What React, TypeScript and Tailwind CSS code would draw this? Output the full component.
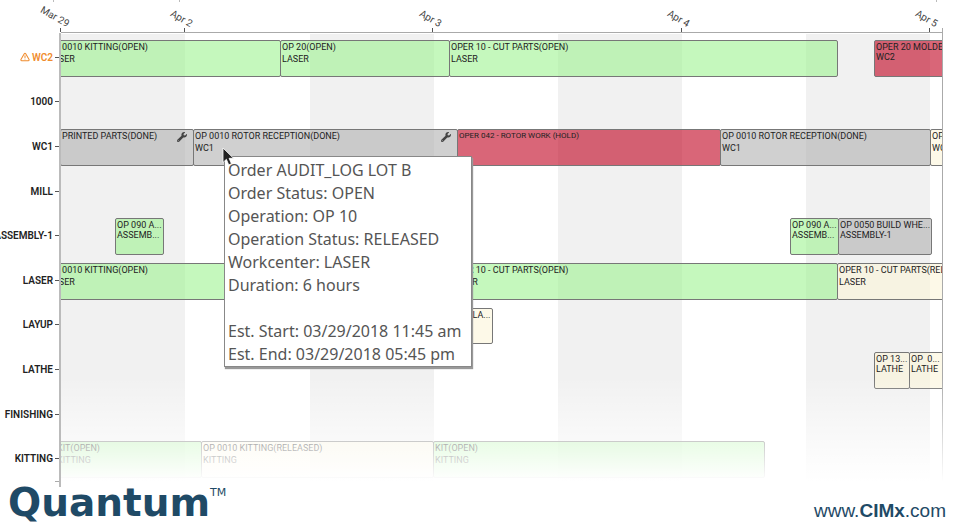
import { clsx } from 'clsx'
import { TriangleAlert } from 'lucide-react'
import { FaWrench } from 'react-icons/fa'

type Status = 'open' | 'done' | 'hold' | 'released'

interface Task {
  start: number
  end: number
  title: string
  center?: string
  status: Status
  compact?: boolean
  wrench?: boolean
}

interface Lane {
  name: string
  warning?: boolean
  tasks: Task[]
}

// width of the visible time range, in the same units as start / end
const RANGE = 881

const pct = (value: number) => `${(value / RANGE) * 100}%`

const days = [
  { label: 'Mar 29', at: 0 },
  { label: 'Apr 2', at: 124 },
  { label: 'Apr 3', at: 372 },
  { label: 'Apr 4', at: 620 },
  { label: 'Apr 5', at: 868 },
]

// ends of the ticks that belong to the row above the dates
const upperTicks = [-8, 118, 874]

const shifts = [0, 249, 497, 745]

const statusClass: Record<Status, string> = {
  open: 'bg-[#9ef391]/60',
  done: 'bg-[#b1b1b1]/60',
  hold: 'bg-[#c0001e]/60',
  released: 'bg-[#fcf5d9]/60',
}

const lanes: Lane[] = [
  {
    name: 'WC2',
    warning: true,
    tasks: [
      { start: -15, end: 220, title: 'OP 0010 KITTING(OPEN)', center: 'LASER', status: 'open' },
      { start: 219, end: 389, title: 'OP 20(OPEN)', center: 'LASER', status: 'open' },
      { start: 388, end: 777, title: 'OPER 10 - CUT PARTS(OPEN)', center: 'LASER', status: 'open' },
      { start: 813, end: 890, title: 'OPER 20 MOLDE...', center: 'WC2', status: 'hold', compact: true },
    ],
  },
  { name: '1000', tasks: [] },
  {
    name: 'WC1',
    tasks: [
      { start: -1, end: 133, title: 'PRINTED PARTS(DONE)', status: 'done', wrench: true },
      { start: 132, end: 397, title: 'OP 0010 ROTOR RECEPTION(DONE)', center: 'WC1', status: 'done', wrench: true },
      { start: 396, end: 660, title: 'OPER 042 - ROTOR WORK (HOLD)', status: 'hold' },
      { start: 659, end: 870, title: 'OP 0010 ROTOR RECEPTION(DONE)', center: 'WC1', status: 'done' },
      { start: 869, end: 960, title: 'OP 0020', center: 'WC1', status: 'released' },
    ],
  },
  { name: 'MILL', tasks: [] },
  {
    name: 'ASSEMBLY-1',
    tasks: [
      { start: 54, end: 103, title: 'OP 090 A...', center: 'ASSEMB...', status: 'open', compact: true },
      { start: 729, end: 778, title: 'OP 090 A...', center: 'ASSEMB...', status: 'open', compact: true },
      { start: 777, end: 871, title: 'OP 0050 BUILD WHE...', center: 'ASSEMBLY-1', status: 'done', compact: true },
    ],
  },
  {
    name: 'LASER',
    tasks: [
      { start: -15, end: 220, title: 'OP 0010 KITTING(OPEN)', center: 'LASER', status: 'open' },
      { start: 388, end: 777, title: 'OPER 10 - CUT PARTS(OPEN)', center: 'LASER', status: 'open' },
      { start: 776, end: 960, title: 'OPER 10 - CUT PARTS(RELEASED)', center: 'LASER', status: 'released' },
    ],
  },
  {
    name: 'LAYUP',
    tasks: [{ start: 383, end: 432, title: 'OP 10 LA...', status: 'released', compact: true }],
  },
  {
    name: 'LATHE',
    tasks: [
      { start: 813, end: 849, title: 'OP 13...', center: 'LATHE', status: 'released', compact: true },
      { start: 848, end: 890, title: 'OP  0...', center: 'LATHE', status: 'released', compact: true },
    ],
  },
  { name: 'FINISHING', tasks: [] },
  {
    name: 'KITTING',
    tasks: [
      { start: -6, end: 141, title: 'KIT(OPEN)', center: 'KITTING', status: 'open' },
      { start: 140, end: 373, title: 'OP 0010 KITTING(RELEASED)', center: 'KITTING', status: 'released' },
      { start: 372, end: 704, title: 'KIT(OPEN)', center: 'KITTING', status: 'open' },
    ],
  },
]

const details = [
  'Order AUDIT_LOG LOT B',
  'Order Status: OPEN',
  'Operation: OP 10',
  'Operation Status: RELEASED',
  'Workcenter: LASER',
  'Duration: 6 hours',
  '',
  'Est. Start: 03/29/2018 11:45 am',
  'Est. End: 03/29/2018 05:45 pm',
]

function TaskBar({ task }: { task: Task }) {
  return (
    <div
      className={clsx(
        'absolute inset-y-1 overflow-hidden whitespace-pre rounded-[2px] border border-[#777] pl-px text-[#222]',
        task.status === 'hold' && !task.compact ? 'text-[8px]' : 'text-[9px]',
        task.compact ? 'leading-[10px] pt-px' : 'leading-3',
        statusClass[task.status],
      )}
      style={{ left: pct(task.start), width: pct(task.end - task.start) }}
    >
      <div>{task.title}</div>
      {task.center && <div>{task.center}</div>}
      {task.wrench && <FaWrench className="absolute right-1.5 top-0.5 size-2.5 text-[#444]" />}
    </div>
  )
}

function TimeAxis() {
  return (
    <div className="relative h-[33px] border-b border-[#aaa]">
      {upperTicks.map((at) => (
        <div key={at} className="absolute top-0 h-0.5 w-px bg-[#bbb]" style={{ left: pct(at) }} />
      ))}
      {days.map((day) => (
        <div key={day.label} className="absolute bottom-0 h-1 w-px bg-[#555]" style={{ left: pct(day.at - 1) }}>
          <span className="absolute -right-1 bottom-0.5 origin-bottom-right rotate-[30deg] whitespace-nowrap text-[10px] leading-3 text-[#444]">
            {day.label}
          </span>
        </div>
      ))}
      <div className="absolute bottom-0 right-0 h-1 w-px bg-[#aaa]" />
    </div>
  )
}

function Tooltip() {
  return (
    <div
      role="tooltip"
      className="absolute left-[163px] top-[123px] whitespace-nowrap border border-[#888] bg-white pl-[3px] pr-2.5 pt-0.5 font-['Noto_Sans',sans-serif] text-[16px] leading-[23px] text-[#555] shadow-[1px_2px_1px_#999]"
    >
      {details.map((line, index) => (
        <p key={index} className="min-h-[23px]">
          {line}
        </p>
      ))}
    </div>
  )
}

function Cursor() {
  return (
    <svg className="absolute left-[161px] top-[114px] h-[19px] w-3" viewBox="0 0 12 19" aria-hidden="true">
      <path d="M1 1v14.5l3.4-3.2 2.3 5.5 2.7-1.1-2.3-5.4h4.4z" fill="#222" stroke="#fff" strokeWidth="0.8" />
    </svg>
  )
}

export default function App() {
  return (
    <div className="min-h-screen overflow-hidden bg-white font-['Roboto',sans-serif]">
      <main className="grid grid-cols-[61px_minmax(0,1fr)_17px]">
        <div />
        <TimeAxis />
        <div />

        {/* Workcenter names */}
        <div className="overflow-hidden border-r-2 border-[#bbb] pb-[5px] pt-0.5">
          <div className="grid h-[446px] grid-cols-1 grid-rows-10">
            {lanes.map((lane) => (
              <div
                key={lane.name}
                className={clsx(
                  'flex items-center justify-end gap-0.5 whitespace-nowrap text-[10px] font-semibold',
                  lane.warning ? 'text-[#f08c2e]' : 'text-[#222]',
                )}
              >
                {lane.warning && <TriangleAlert className="size-2.5" strokeWidth={2.5} />}
                <span>{lane.name}</span>
                <span className="h-px w-1 shrink-0 bg-[#555]" />
              </div>
            ))}
          </div>
          <div className="ml-auto h-px w-1 bg-[#aaa]" />
        </div>

        {/* Schedule */}
        <div className="relative">
          <div className="relative overflow-hidden border-r border-[#aaa] pt-[3px]">
            {shifts.map((start) => (
              <div
                key={start}
                className="absolute bottom-0 top-px bg-[#f1f1f1]"
                style={{ left: pct(start), width: pct(124) }}
              />
            ))}
            <div className="grid h-[446px] grid-rows-10">
              {lanes.map((lane) => (
                <div key={lane.name} className="relative">
                  {lane.tasks.map((task) => (
                    <TaskBar key={task.start} task={task} />
                  ))}
                </div>
              ))}
            </div>
          </div>
          <div className="absolute -right-px bottom-0 left-0 h-[110px] bg-linear-to-b from-transparent to-white to-95%" />
          <Tooltip />
          <Cursor />
        </div>
        <div />
      </main>

      <footer className="flex items-start justify-between pl-2 pr-3.5 text-[#1f4a66]">
        <div className="flex items-start font-['DejaVu_Sans',sans-serif]">
          <span className="text-[39px] font-bold leading-8">Quantum</span>
          <span className="text-[11px] leading-3">TM</span>
        </div>
        <a href="https://www.cimx.com" className="pt-3 font-['Liberation_Sans',sans-serif] text-[19px] leading-6">
          www.<b>CIMx</b>.com
        </a>
      </footer>
    </div>
  )
}
